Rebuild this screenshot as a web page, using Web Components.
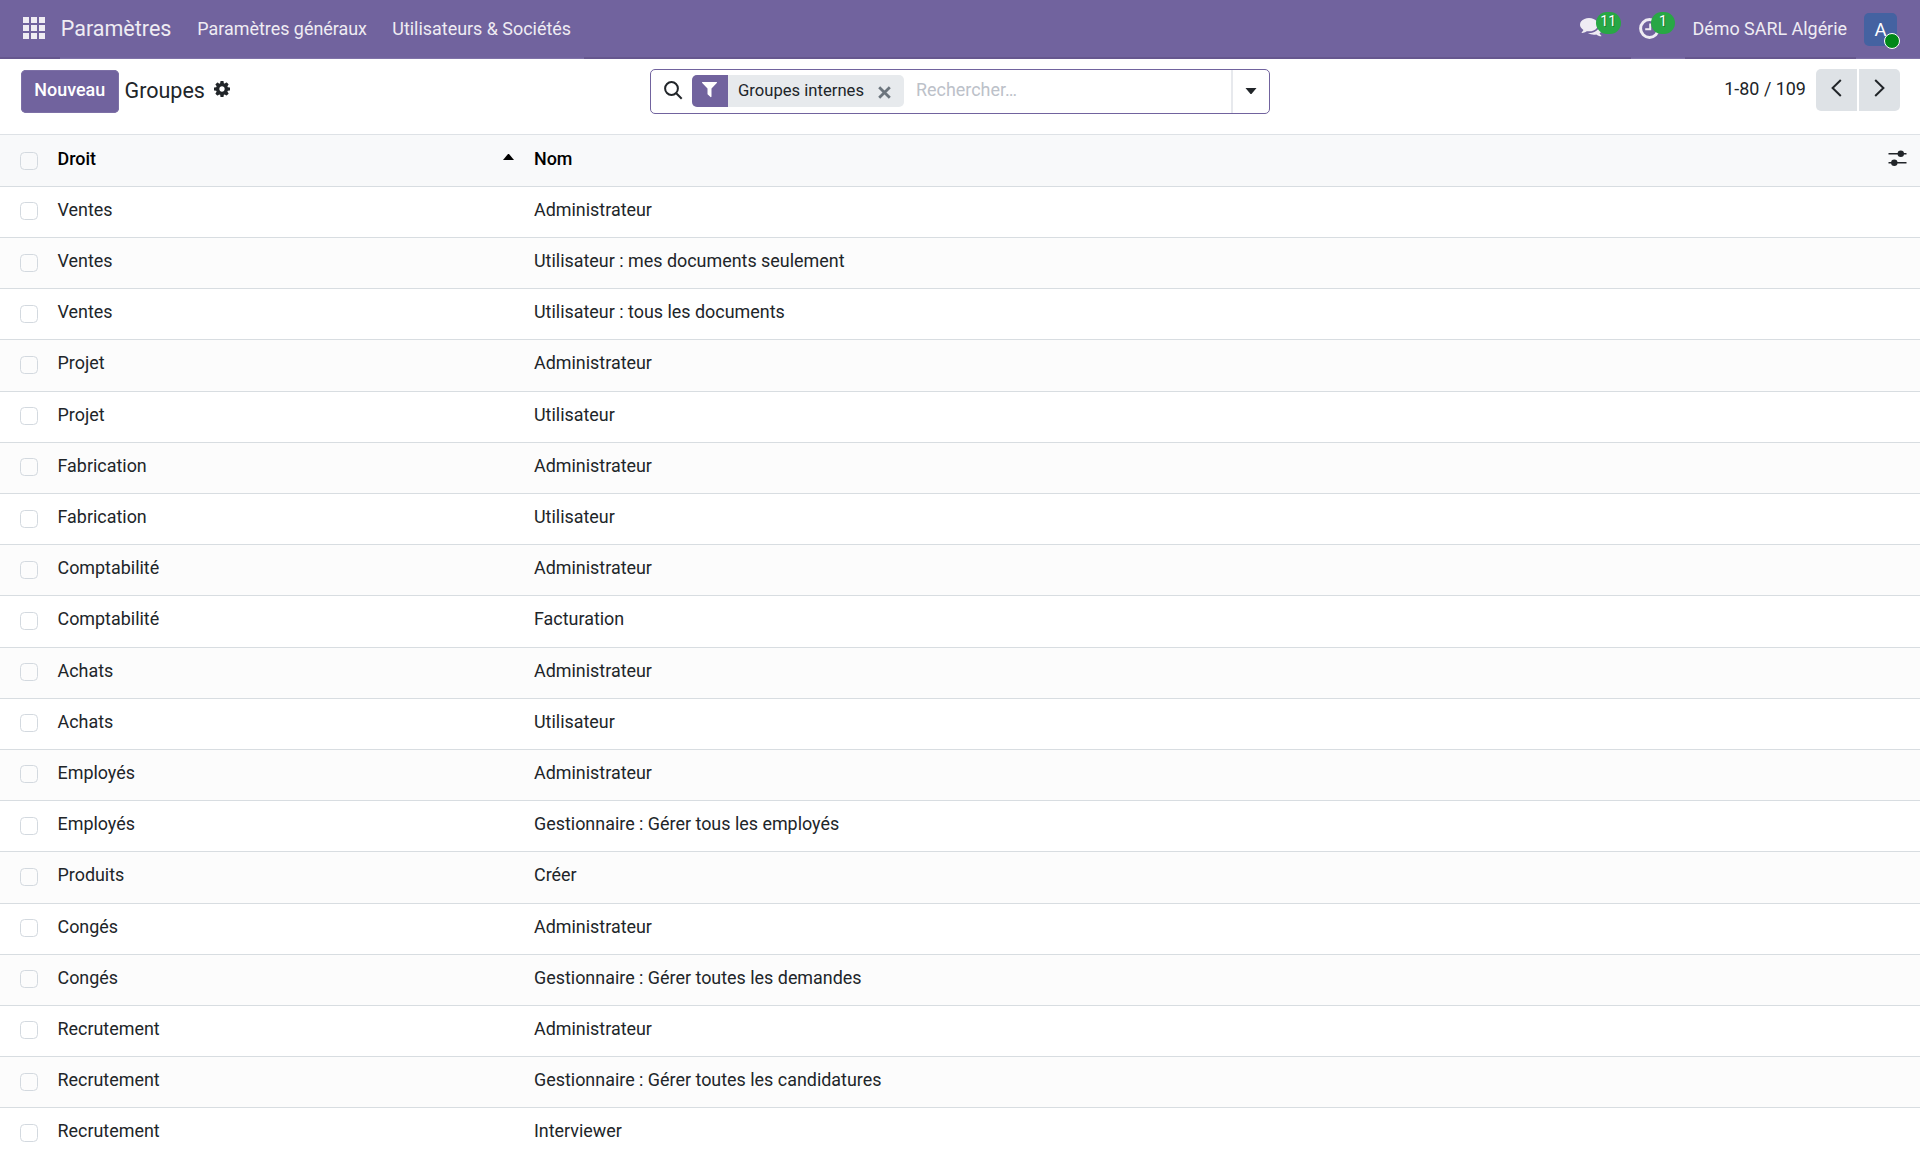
<!DOCTYPE html>
<html lang="fr">
<head>
<meta charset="utf-8">
<title>Groupes</title>
<style>
	html, body {
		margin: 0;
		height: 100%;
		overflow: hidden;
	}
	body {
		font-family: Roboto, "Liberation Sans", sans-serif;
		font-size: 17.92px;
		line-height: 27px;
		color: #212529;
		background: #fff;
	}
</style>
</head>
<body>
<settings-app></settings-app>

<script>
class NavBadge extends HTMLElement {
	constructor() {
		super();
		this.attachShadow({ mode: 'open' });
	}

	connectedCallback() {
		this.shadowRoot.innerHTML = `
			<style>
				:host { display: block; position: relative; height: 58px; width: var(--w); }
				svg { position: absolute; left: 0; top: var(--icon-top, 18px); fill: #efecf3; }
				span {
					position: absolute;
					left: var(--badge-left);
					top: 12px;
					width: var(--badge-w);
					height: 21.5px;
					border-radius: 11px;
					background: #28a745;
					color: #fff;
					font-size: 14.1px;
					line-height: 19px;
					text-align: center;
					text-shadow: 1px 1px 0 rgba(0, 0, 0, .3);
				}
			</style>
			${this.icon()}
			<span><slot></slot></span>
		`;
	}

	icon() {
		if (this.getAttribute('icon') === 'chat') {
			return `<svg width="23" height="20" viewBox="0 0 1792 1536" preserveAspectRatio="none"><path d="M1408 512q0 139-94 257t-256.500 186.500-353.500 68.500q-86 0-176-16-124 88-278 128-36 9-86 16h-3q-11 0-20.500-8t-11.500-21q-1-3-1-6.500t.5-6.500 2-6l2.500-5 3.500-5.500 4-5 4.500-5 4-4.500q5-6 23-25t26-29.500 22.500-29 25-38.500 20.500-44q-124-72-195-177t-71-224q0-139 94-257t256.500-186.500 353.500-68.500 353.500 68.500 256.500 186.500 94 257zm384 256q0 120-71 224.500t-195 176.500q10 24 20.500 44t25 38.500 22.500 29 26 29.500 23 25q1 1 4 4.500t4.500 5 4 5 3.500 5.500l2.500 5 2 6 .5 6.500-1 6.500q-3 14-13 22t-22 7q-50-7-86-16-154-40-278-128-90 16-176 16-271 0-472-132 58 4 88 4 161 0 309-45t264-129q125-92 192-212t67-254q0-77-23-152 129 71 204 178t75 230z"/></svg>`;
		}
		return `<svg width="21" height="21" viewBox="0 0 21 21"><circle cx="10.500" cy="10.500" r="8.900" fill="none" stroke="#efecf3" stroke-width="3"/><path d="M10.200 5.500h2v6.700h-6v-2h4z"/></svg>`;
	}
}

customElements.define('nav-badge', NavBadge);

class NavBar extends HTMLElement {
	constructor() {
		super();
		this.attachShadow({ mode: 'open' });
	}

	connectedCallback() {
		this.shadowRoot.innerHTML = `
			<style>
				:host {
					display: flex;
					align-items: flex-start;
					box-sizing: border-box;
					height: 59px;
					border-bottom: 2px solid #66578e;
					background: #71639e;
					color: #efecf3;
					line-height: 57px;
					white-space: nowrap;
				}
				.apps { width: 60px; height: 57px; }
				.apps svg { display: block; margin: 17px 0 0 23px; }
				.menu, .clock, .user { display: flex; height: 59px; background: #71639e; box-shadow: inset 0 -1px #8073a8; }
				.menu { box-sizing: border-box; width: 524px; padding-left: .8px; }
				.brand { width: 136.500px; font-size: 21.5px; }
				.menu span:nth-child(2) { width: 195px; }
				.right { margin-left: auto; display: flex; }
				nav-badge { flex: none; }
				.chat { --w: 51px; --badge-left: 16px; --badge-w: 25.500px; }
				.clock { width: 54px; }
				.clock nav-badge { --w: 54px; --badge-left: 12.500px; --badge-w: 24px; margin-left: 8px; }
				.company { width: 163.500px; padding-left: 8px; }
				.user { width: 64px; }
				.avatar {
					position: relative;
					width: 33px;
					height: 33px;
					margin: 13px 0 0 8px;
					border-radius: 5px;
					background: #4462a1;
					color: #fff;
					font-size: 18.500px;
					line-height: 34px;
					text-align: center;
				}
				.avatar i {
					position: absolute;
					left: 20px;
					top: 20px;
					box-sizing: border-box;
					width: 16px;
					height: 16px;
					border: 1.500px solid #fff;
					border-radius: 50%;
					background: #008818;
				}
			</style>
			<div class="apps">
				<svg width="22" height="22" viewBox="0 0 22 22" fill="#efecf3">
					<path d="M0 0h6v6H0zM8 0h6v6H8zM16 0h6v6h-6zM0 8h6v6H0zM8 8h6v6H8zM16 8h6v6h-6zM0 16h6v6H0zM8 16h6v6H8zM16 16h6v6h-6z"/>
				</svg>
			</div>
			<div class="menu">
				<span class="brand">Paramètres</span>
				<span>Paramètres généraux</span>
				<span>Utilisateurs &amp; Sociétés</span>
			</div>
			<div class="right">
				<nav-badge class="chat" icon="chat">11</nav-badge>
				<div class="clock"><nav-badge icon="clock">1</nav-badge></div>
				<div class="company">Démo SARL Algérie</div>
				<div class="user"><div class="avatar">A<i></i></div></div>
			</div>
		`;
	}
}

customElements.define('nav-bar', NavBar);

class SearchBar extends HTMLElement {
	constructor() {
		super();
		this.attachShadow({ mode: 'open' });
	}

	connectedCallback() {
		this.shadowRoot.innerHTML = `
			<style>
				:host {
					display: flex;
					box-sizing: border-box;
					width: 620px;
					height: 45px;
					border: 1.500px solid #71639e;
					border-radius: 5px;
				}
				.lens { margin: 10.500px 0 0 12.500px; }
				.facet {
					display: flex;
					width: 212px;
					height: 32px;
					margin: 5px 0 0 9.500px;
					border-radius: 5px;
					background: #e7eaed;
					overflow: hidden;
					font-size: 16.640px;
					line-height: 31px;
				}
				.filter { width: 36px; background: #71639e; }
				.filter svg { display: block; margin: 6.500px 0 0 10px; }
				.facet span { width: 140px; margin-left: 10px; }
				.close { margin-top: 10.500px; }
				.hint { margin-left: 12px; color: #bcc1c9; line-height: 40px; }
				.toggle { box-sizing: border-box; width: 38px; margin-left: auto; border-left: 2px solid #e7e9ed; }
				.toggle svg { display: block; margin: 17.500px 0 0 12px; }
			</style>
			<svg class="lens" width="19" height="19" viewBox="0 0 19 19" fill="none" stroke="#212529" stroke-width="2">
				<circle cx="7.500" cy="7.500" r="6.400"/><path d="M12 12l5.700 5.700"/>
			</svg>
			<div class="facet">
				<div class="filter">
					<svg width="15" height="16" viewBox="0 0 15 16" fill="#fff"><path d="M.4 0h14.200q.7.500.2 1.100L9.500 6.400v8.200q-.3.800-1 .4L5.800 12.500q-.3-.3-.3-.6V6.400L.2 1.100Q-.3.500.4 0z"/></svg>
				</div>
				<span>Groupes internes</span>
				<svg class="close" width="13" height="13" viewBox="0 0 13 13" stroke="#6c757d" stroke-width="2.800"><path d="M1.200 1.200l10.600 10.600M11.800 1.200L1.200 11.800"/></svg>
			</div>
			<div class="hint">Rechercher…</div>
			<div class="toggle"><svg width="12" height="7" viewBox="0 0 12 7" fill="#212529"><path d="M.5 0h11L6.500 6H5.500z"/></svg></div>
		`;
	}
}

customElements.define('search-bar', SearchBar);

class ControlPanel extends HTMLElement {
	constructor() {
		super();
		this.attachShadow({ mode: 'open' });
	}

	connectedCallback() {
		this.shadowRoot.innerHTML = `
			<style>
				:host {
					display: grid;
					grid-template-columns: 650px 620px 1fr;
					align-items: start;
					height: 75px;
				}
				.left { display: flex; padding: 11px 0 0 20.500px; }
				.new {
					box-sizing: border-box;
					width: 98.500px;
					height: 43px;
					border-radius: 5px;
					background: #71639e;
					box-shadow: inset 0 0 0 1px #7d70a6;
					color: #fff;
					font-weight: 500;
					line-height: 40px;
					text-align: center;
				}
				.title { margin-left: 5.500px; font-size: 21.500px; line-height: 41px; }
				.gear { margin: 11px 0 0 9px; }
				search-bar { margin-top: 10px; }
				.right { display: flex; justify-content: flex-end; padding: 10px 20px 0 0; }
				.count { margin-right: 10px; line-height: 39px; }
				.pager { display: flex; gap: 1.500px; }
				.pager div { width: 41.300px; height: 42px; background: #dee2e6; border-radius: 5px 0 0 5px; }
				.pager div + div { border-radius: 0 5px 5px 0; }
				.pager svg { display: block; margin: 10px auto 0; }
			</style>
			<div class="left">
				<div class="new">Nouveau</div>
				<div class="title">Groupes</div>
				<svg class="gear" width="16" height="16" viewBox="0 0 1536 1536" fill="#212529"><path d="M1024 768q0-106-75-181t-181-75-181 75-75 181 75 181 181 75 181-75 75-181zm512-109v222q0 12-8 23t-20 13l-185 28q-19 54-39 91 35 50 107 138 10 12 10 25t-9 23q-27 37-99 108t-94 71q-12 0-26-9l-138-108q-44 23-91 38-16 136-29 186-7 28-36 28H657q-14 0-24.500-8.500T621 1506l-28-184q-49-16-90-37l-141 107q-10 9-25 9-14 0-25-11-126-114-165-168-7-10-7-23 0-12 8-23 15-21 51-66.500t54-70.500q-27-50-41-99L29 913q-13-2-21-12.500T0 877V655q0-12 8-23t19-13l186-28q14-46 39-92-40-57-107-138-10-12-10-24 0-10 9-23 26-36 98.500-107.500T337 135q13 0 26 10l138 107q44-23 91-38 16-136 29-186 7-28 36-28h222q14 0 24.500 8.500T915 30l28 184q49 16 90 37l142-107q9-9 24-9 13 0 25 10 129 119 165 170 7 8 7 22 0 12-8 23-15 21-51 66.500t-54 70.500q26 50 41 98l183 28q13 2 21 12.500t8 23.500z"/></svg>
			</div>
			<search-bar></search-bar>
			<div class="right">
				<div class="count">1-80 / 109</div>
				<div class="pager">
					<div><svg width="11" height="18" viewBox="0 0 11 18" fill="none" stroke="#212529" stroke-width="2"><path d="M9.800 1L1.600 9l8.200 8"/></svg></div>
					<div><svg width="11" height="18" viewBox="0 0 11 18" fill="none" stroke="#212529" stroke-width="2"><path d="M1.200 1l8.200 8-8.200 8"/></svg></div>
				</div>
			</div>
		`;
	}
}

customElements.define('control-panel', ControlPanel);

class GroupRow extends HTMLElement {
	constructor() {
		super();
		this.attachShadow({ mode: 'open' });
	}

	connectedCallback() {
		this.shadowRoot.innerHTML = `
			<style>
				:host {
					display: grid;
					grid-template-columns: 57.500px 476.500px 1fr auto;
					box-sizing: border-box;
					height: 51.200px;
					border-bottom: 1px solid #d8dde1;
					line-height: 45.400px;
				}
				:host(:nth-of-type(even)) { background: #fcfcfc; }
				:host([head]) {
					height: 52.900px;
					border-top: 1px solid #dee2e6;
					background: #f8f9fa;
					color: #000;
					font-weight: 500;
					line-height: 48px;
				}
				i {
					box-sizing: border-box;
					width: 18px;
					height: 18px;
					margin: 15.500px 0 0 20.400px;
					border: 1px solid #d3d9df;
					border-radius: 4.500px;
				}
				:host([head]) i { margin-top: 16.500px; }
			</style>
			<i></i><slot></slot>
		`;
	}
}

customElements.define('group-row', GroupRow);

class GroupList extends HTMLElement {
	constructor() {
		super();
		this.attachShadow({ mode: 'open' });
	}

	connectedCallback() {
		const rows = [
			['Ventes', 'Administrateur'],
			['Ventes', 'Utilisateur : mes documents seulement'],
			['Ventes', 'Utilisateur : tous les documents'],
			['Projet', 'Administrateur'],
			['Projet', 'Utilisateur'],
			['Fabrication', 'Administrateur'],
			['Fabrication', 'Utilisateur'],
			['Comptabilité', 'Administrateur'],
			['Comptabilité', 'Facturation'],
			['Achats', 'Administrateur'],
			['Achats', 'Utilisateur'],
			['Employés', 'Administrateur'],
			['Employés', 'Gestionnaire : Gérer tous les employés'],
			['Produits', 'Créer'],
			['Congés', 'Administrateur'],
			['Congés', 'Gestionnaire : Gérer toutes les demandes'],
			['Recrutement', 'Administrateur'],
			['Recrutement', 'Gestionnaire : Gérer toutes les candidatures'],
			['Recrutement', 'Interviewer'],
		];
		this.shadowRoot.innerHTML = `
			<style>
				:host { display: block; }
				.sort { display: flex; justify-content: space-between; }
				.sort svg { margin: 19px 20px 0 0; }
				.options { margin: 15px 13px 0 0; }
			</style>
			<group-row head>
				<span class="sort">Droit<svg width="11" height="6" viewBox="0 0 11 6"><path d="M5 0h1l5 6H0z"/></svg></span>
				<span>Nom</span>
				<svg class="options" width="19" height="16" viewBox="0 0 19 16" fill="#212529"><path d="M.5 3h18v1.500H.5zM.5 12h18v1.500H.5z"/><circle cx="12.800" cy="3.700" r="3.200"/><circle cx="6.300" cy="12.700" r="3.200"/></svg>
			</group-row>
			<div>${rows.map(([right, name]) => `<group-row><span>${right}</span><span>${name}</span></group-row>`).join('')}</div>
		`;
	}
}

customElements.define('group-list', GroupList);

class SettingsApp extends HTMLElement {
	constructor() {
		super();
		this.attachShadow({ mode: 'open' });
	}

	connectedCallback() {
		this.shadowRoot.innerHTML = `
			<style>
				:host { display: block; height: 100vh; overflow: hidden; }
			</style>
			<nav-bar></nav-bar>
			<control-panel></control-panel>
			<group-list></group-list>
		`;
	}
}

customElements.define('settings-app', SettingsApp);
</script>
</body>
</html>
